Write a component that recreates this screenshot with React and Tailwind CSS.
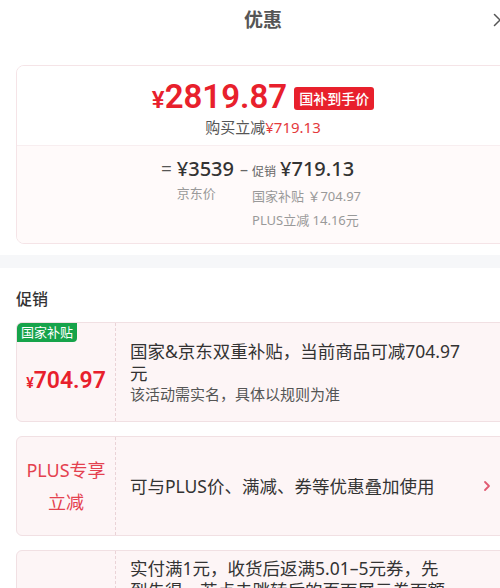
import React from "react";

const font = { fontFamily: '"Noto Sans","Noto Sans CJK SC",sans-serif' };
const numFont = { fontFamily: '"Roboto","Noto Sans CJK SC",sans-serif' };

function PromoCard({ left, children, chevron, extra }) {
  return (
    <div className="relative mx-4 flex h-[100px] overflow-hidden rounded-md border border-[#f1e0e3] bg-[#fdf5f6]">
      <div className="relative flex w-[99px] shrink-0 items-center justify-center border-r border-dashed border-[#ead3d7]">
        {left}
      </div>
      <div className="flex flex-1 items-center pl-[14px] pr-[30px]">{children}</div>
      {chevron && (
        <div className="absolute right-[18px] top-1/2 -translate-y-1/2">
          <svg width="8" height="12" viewBox="0 0 8 12" fill="none">
            <path d="M2 2l4 4-4 4" stroke="#e05a72" strokeWidth="1.8" strokeLinecap="round" strokeLinejoin="round" />
          </svg>
        </div>
      )}
      {extra}
    </div>
  );
}

export default function App() {
  return (
    <div className="h-[588px] w-[500px] overflow-hidden bg-white" style={font}>
      <div className="w-[526px]">
        {/* header */}
        <div className="relative flex h-[40px] items-center justify-center">
          <span className="text-[19px] font-bold leading-none text-[#555]">优惠</span>
          <div className="absolute right-[19px] top-[13px]">
            <svg width="14" height="14" viewBox="0 0 14 14" fill="none">
              <path d="M1.5 1.5l11 11M12.5 1.5l-11 11" stroke="#555" strokeWidth="1.5" strokeLinecap="round" />
            </svg>
          </div>
        </div>

        {/* summary card */}
        <div className="mx-4 mt-[25px] overflow-hidden rounded-lg border border-[#f5e4e7]">
          <div className="flex h-[79px] flex-col items-center bg-white pt-[14px]">
            <div className="flex items-center gap-[7px]">
              <div className="flex items-baseline text-[#e8202c]" style={numFont}>
                <span className="text-[24px] font-semibold leading-none">¥</span>
                <span className="text-[33px] font-semibold leading-[34px]">2819.87</span>
              </div>
              <span className="mt-[2px] rounded-[3px] bg-[#e8202c] px-[5px] text-[14px] font-medium leading-[23px] text-white">
                国补到手价
              </span>
            </div>
            <div className="mt-[3px] text-[15px] leading-[20px] text-[#555]">
              购买立减<span className="text-[#e4393c]">¥719.13</span>
            </div>
          </div>
          <div className="flex h-[98px] justify-center border-t border-[#f8eef0] bg-[#fffafa] pr-[4px] pt-[11px]">
            <span className="mr-[5px] text-[19px] leading-[24px] text-[#555]">=</span>
            <div className="flex flex-col">
              <span className="text-[20px] font-medium leading-[24px] text-[#333]">¥3539</span>
              <span className="mt-[2px] text-[13px] leading-[20px] text-[#999]">京东价</span>
            </div>
            <span className="ml-[6px] mr-[4px] text-[16px] leading-[24px] text-[#666]">–</span>
            <div className="flex flex-col">
              <div className="flex items-baseline">
                <span className="mr-[4px] text-[12px] leading-[24px] text-[#666]">促销</span>
                <span className="text-[20px] font-medium leading-[24px] text-[#333]">¥719.13</span>
              </div>
              <span className="mt-[2px] text-[13px] leading-[20px] text-[#999]">国家补贴 ￥704.97</span>
              <span className="mt-[4px] text-[13px] leading-[20px] text-[#999]">PLUS立减 14.16元</span>
            </div>
          </div>
        </div>

        <div className="mt-[11px] h-[13px] bg-[#f6f7f9]" />

        <div className="px-4 pt-[20px] text-[16px] font-medium leading-[22px] text-[#333]">促销</div>

        <div className="mt-[12px] flex flex-col gap-[14px]">
          <PromoCard
            left={
              <div className="mt-[18px] flex items-baseline text-[#e8202c]" style={numFont}>
                <span className="text-[14px] font-semibold">¥</span>
                <span className="text-[23px] font-semibold leading-none">704.97</span>
              </div>
            }
            extra={
              <div className="absolute left-0 top-0 rounded-br-[4px] bg-[#16a34a] px-[4px] text-[13px] leading-[19px] text-white">
                国家补贴
              </div>
            }
          >
            <div className="flex flex-col text-[17.5px] leading-[22px] text-[#333]">
              <span className="whitespace-nowrap">国家&amp;京东双重补贴，当前商品可减704.97</span>
              <span>元</span>
              <span className="text-[15px] leading-[21px] text-[#555]">该活动需实名，具体以规则为准</span>
            </div>
          </PromoCard>

          <PromoCard
            chevron
            left={
              <div className="text-center text-[18px] leading-[32px] text-[#e4414f]">
                PLUS专享
                <br />
                立减
              </div>
            }
          >
            <span className="text-[17.5px] leading-[22px] text-[#333]">可与PLUS价、满减、券等优惠叠加使用</span>
          </PromoCard>

          <PromoCard left={null}>
            <span className="flex flex-col self-start pt-[6px] text-[17.5px] leading-[22px] text-[#333]">
              <span className="whitespace-nowrap">实付满1元，收货后返满5.01–5元券，先</span>
              <span className="whitespace-nowrap">到先得，若点击跳转后的页面展示券面额</span>
              <span className="whitespace-nowrap">与实际不一致，以实际为准</span>
            </span>
          </PromoCard>
        </div>
      </div>
    </div>
  );
}
